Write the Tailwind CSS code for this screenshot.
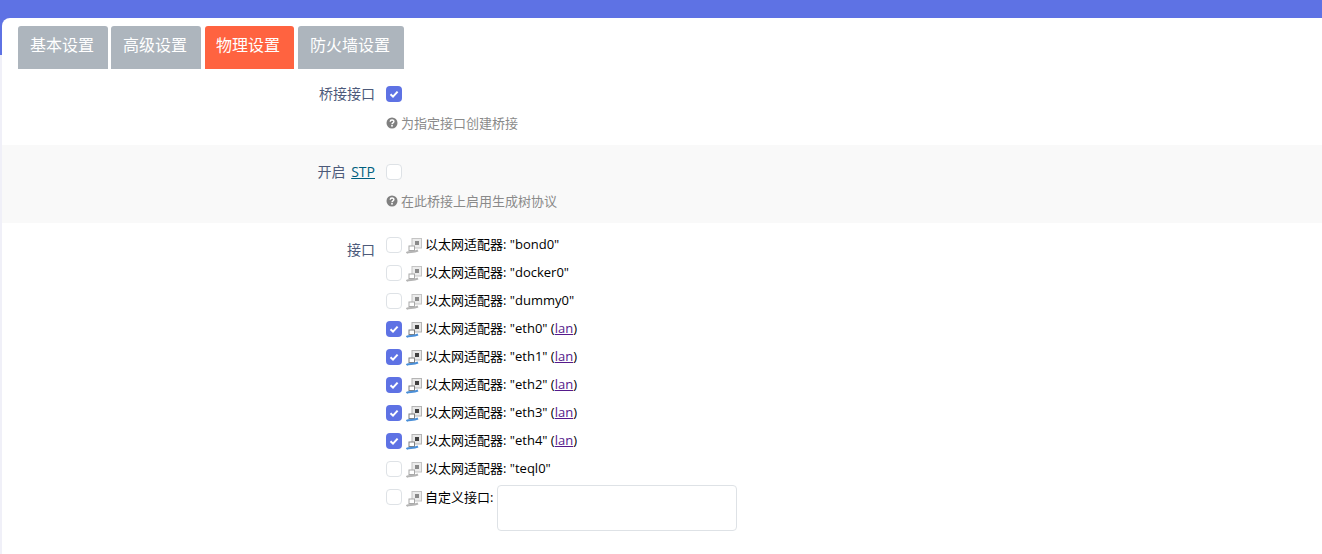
<!DOCTYPE html>
<html lang="en">
  <head>
    <meta charset="UTF-8" />
    <title>物理设置</title>
    <script src="https://cdn.jsdelivr.net/npm/@tailwindcss/browser@4"></script>
  </head>
  <body class="bg-[#f0f0f8] h-[554px] overflow-hidden font-['Open_Sans','Noto_Sans_CJK_SC',sans-serif]">
    <div class="h-[55px] bg-[#5e72e4]"></div>

    <main class="-mt-[37px] ml-[2px] h-[536px] bg-white rounded-tl-[8px] overflow-hidden">
      <!-- tabs -->
      <nav class="flex h-[51px] pt-2 pl-4 text-[16px] text-white">
        <a class="w-[90px] h-[43px] leading-[38px] pl-3 bg-[#adb5bd] rounded-t-[3px]">基本设置</a>
        <a class="w-[90px] h-[43px] ml-[3px] leading-[38px] pl-3 bg-[#adb5bd] rounded-t-[3px]">高级设置</a>
        <a class="w-[89px] h-[43px] ml-[4px] leading-[38px] pl-[11px] bg-[#ff6340] rounded-t-[3px]">物理设置</a>
        <a class="w-[106px] h-[43px] ml-[4px] leading-[38px] pl-3 bg-[#adb5bd] rounded-t-[3px]">防火墙设置</a>
      </nav>

      <!-- bridge -->
      <section class="flex h-[76px] pt-[16px] text-[13px]">
        <label class="w-[373px] text-right text-[14px] leading-[18px] text-[#4d5a7a]">桥接接口</label>
        <div class="ml-[11px]">
          <span class="flex items-center justify-center mt-[1px] w-4 h-4 rounded-[4px] bg-[#5e72e4]">
            <svg viewBox="0 0 10 10" class="w-[10px] h-[10px]"><path d="M1.5 5.2 L4 7.6 L8.6 2.6" fill="none" stroke="#fff" stroke-width="2"/></svg>
          </span>
          <p class="flex items-center gap-[3px] mt-[12px] leading-[18px] text-[#8a8a8a]">
            <svg viewBox="0 0 12 12" class="w-3 h-3"><circle cx="6" cy="6" r="5.5" fill="#808080"/><path d="M4.2 4.7 C4.2 2.5 7.9 2.5 7.9 4.6 C7.9 5.9 6 5.9 6 7.2" fill="none" stroke="#fff" stroke-width="1.4"/><rect x="5.2" y="8" width="1.6" height="1.6" fill="#fff"/></svg>
            为指定接口创建桥接
          </p>
        </div>
      </section>

      <!-- stp -->
      <section class="flex h-[78px] pt-[18px] bg-[#f9f9f9] text-[13px]">
        <label class="w-[373px] text-right text-[14px] leading-[18px] text-[#4d5a7a]">开启 <a class="ml-[2px] underline text-[#005f7f]">STP</a></label>
        <div class="ml-[11px]">
          <span class="block mt-[1px] w-4 h-4 rounded-[4px] bg-white border border-[#dee2e6]"></span>
          <p class="flex items-center gap-[3px] mt-[12px] leading-[18px] text-[#8a8a8a]">
            <svg viewBox="0 0 12 12" class="w-3 h-3"><circle cx="6" cy="6" r="5.5" fill="#808080"/><path d="M4.2 4.7 C4.2 2.5 7.9 2.5 7.9 4.6 C7.9 5.9 6 5.9 6 7.2" fill="none" stroke="#fff" stroke-width="1.4"/><rect x="5.2" y="8" width="1.6" height="1.6" fill="#fff"/></svg>
            在此桥接上启用生成树协议
          </p>
        </div>
      </section>

      <!-- interfaces -->
      <section class="flex pt-[8px] text-[13px]">
        <label class="w-[373px] pt-[10px] text-right text-[14px] leading-[18px] text-[#4d5a7a]">接口</label>
        <ul class="ml-[11px] text-black">
          <li class="flex items-center h-[28px]">
            <span class="w-4 h-4 rounded-[4px] bg-white border border-[#dee2e6]"></span>
            <svg viewBox="0 0 16 16" class="w-4 h-4 ml-[4px] mt-[2px]"><rect x="6" y="0.5" width="9.5" height="9.5" fill="#ececec" stroke="#c4c4c4"/><rect x="9" y="3" width="4" height="4" fill="#8a8a8a"/><rect x="3" y="8" width="5.5" height="4.5" fill="#fff" stroke="#a8a8a8"/><path d="M0.5 15 C3 13 7 15 12 12.5" fill="none" stroke="#b4b4b4" stroke-width="2"/></svg>
            <span class="ml-[3px]">以太网适配器: "bond0"</span>
          </li>
          <li class="flex items-center h-[28px]">
            <span class="w-4 h-4 rounded-[4px] bg-white border border-[#dee2e6]"></span>
            <svg viewBox="0 0 16 16" class="w-4 h-4 ml-[4px] mt-[2px]"><rect x="6" y="0.5" width="9.5" height="9.5" fill="#ececec" stroke="#c4c4c4"/><rect x="9" y="3" width="4" height="4" fill="#8a8a8a"/><rect x="3" y="8" width="5.5" height="4.5" fill="#fff" stroke="#a8a8a8"/><path d="M0.5 15 C3 13 7 15 12 12.5" fill="none" stroke="#b4b4b4" stroke-width="2"/></svg>
            <span class="ml-[3px]">以太网适配器: "docker0"</span>
          </li>
          <li class="flex items-center h-[28px]">
            <span class="w-4 h-4 rounded-[4px] bg-white border border-[#dee2e6]"></span>
            <svg viewBox="0 0 16 16" class="w-4 h-4 ml-[4px] mt-[2px]"><rect x="6" y="0.5" width="9.5" height="9.5" fill="#ececec" stroke="#c4c4c4"/><rect x="9" y="3" width="4" height="4" fill="#8a8a8a"/><rect x="3" y="8" width="5.5" height="4.5" fill="#fff" stroke="#a8a8a8"/><path d="M0.5 15 C3 13 7 15 12 12.5" fill="none" stroke="#b4b4b4" stroke-width="2"/></svg>
            <span class="ml-[3px]">以太网适配器: "dummy0"</span>
          </li>
          <li class="flex items-center h-[28px]">
            <span class="flex items-center justify-center w-4 h-4 rounded-[4px] bg-[#5e72e4]"><svg viewBox="0 0 10 10" class="w-[10px] h-[10px]"><path d="M1.5 5.2 L4 7.6 L8.6 2.6" fill="none" stroke="#fff" stroke-width="2"/></svg></span>
            <svg viewBox="0 0 16 16" class="w-4 h-4 ml-[4px] mt-[2px]"><rect x="6" y="0.5" width="9.5" height="9.5" fill="#e8e8e8" stroke="#b4b4b4"/><rect x="9" y="3" width="4" height="4" fill="#404040"/><rect x="3" y="8" width="5.5" height="4.5" fill="#fff" stroke="#808080"/><path d="M0.5 15 C3 13 7 15 12 12.5" fill="none" stroke="#4a8fd8" stroke-width="2"/></svg>
            <span class="ml-[3px]">以太网适配器: "eth0" (<a class="underline text-[#551a8b]">lan</a>)</span>
          </li>
          <li class="flex items-center h-[28px]">
            <span class="flex items-center justify-center w-4 h-4 rounded-[4px] bg-[#5e72e4]"><svg viewBox="0 0 10 10" class="w-[10px] h-[10px]"><path d="M1.5 5.2 L4 7.6 L8.6 2.6" fill="none" stroke="#fff" stroke-width="2"/></svg></span>
            <svg viewBox="0 0 16 16" class="w-4 h-4 ml-[4px] mt-[2px]"><rect x="6" y="0.5" width="9.5" height="9.5" fill="#e8e8e8" stroke="#b4b4b4"/><rect x="9" y="3" width="4" height="4" fill="#404040"/><rect x="3" y="8" width="5.5" height="4.5" fill="#fff" stroke="#808080"/><path d="M0.5 15 C3 13 7 15 12 12.5" fill="none" stroke="#4a8fd8" stroke-width="2"/></svg>
            <span class="ml-[3px]">以太网适配器: "eth1" (<a class="underline text-[#551a8b]">lan</a>)</span>
          </li>
          <li class="flex items-center h-[28px]">
            <span class="flex items-center justify-center w-4 h-4 rounded-[4px] bg-[#5e72e4]"><svg viewBox="0 0 10 10" class="w-[10px] h-[10px]"><path d="M1.5 5.2 L4 7.6 L8.6 2.6" fill="none" stroke="#fff" stroke-width="2"/></svg></span>
            <svg viewBox="0 0 16 16" class="w-4 h-4 ml-[4px] mt-[2px]"><rect x="6" y="0.5" width="9.5" height="9.5" fill="#e8e8e8" stroke="#b4b4b4"/><rect x="9" y="3" width="4" height="4" fill="#404040"/><rect x="3" y="8" width="5.5" height="4.5" fill="#fff" stroke="#808080"/><path d="M0.5 15 C3 13 7 15 12 12.5" fill="none" stroke="#4a8fd8" stroke-width="2"/></svg>
            <span class="ml-[3px]">以太网适配器: "eth2" (<a class="underline text-[#551a8b]">lan</a>)</span>
          </li>
          <li class="flex items-center h-[28px]">
            <span class="flex items-center justify-center w-4 h-4 rounded-[4px] bg-[#5e72e4]"><svg viewBox="0 0 10 10" class="w-[10px] h-[10px]"><path d="M1.5 5.2 L4 7.6 L8.6 2.6" fill="none" stroke="#fff" stroke-width="2"/></svg></span>
            <svg viewBox="0 0 16 16" class="w-4 h-4 ml-[4px] mt-[2px]"><rect x="6" y="0.5" width="9.5" height="9.5" fill="#e8e8e8" stroke="#b4b4b4"/><rect x="9" y="3" width="4" height="4" fill="#404040"/><rect x="3" y="8" width="5.5" height="4.5" fill="#fff" stroke="#808080"/><path d="M0.5 15 C3 13 7 15 12 12.5" fill="none" stroke="#4a8fd8" stroke-width="2"/></svg>
            <span class="ml-[3px]">以太网适配器: "eth3" (<a class="underline text-[#551a8b]">lan</a>)</span>
          </li>
          <li class="flex items-center h-[28px]">
            <span class="flex items-center justify-center w-4 h-4 rounded-[4px] bg-[#5e72e4]"><svg viewBox="0 0 10 10" class="w-[10px] h-[10px]"><path d="M1.5 5.2 L4 7.6 L8.6 2.6" fill="none" stroke="#fff" stroke-width="2"/></svg></span>
            <svg viewBox="0 0 16 16" class="w-4 h-4 ml-[4px] mt-[2px]"><rect x="6" y="0.5" width="9.5" height="9.5" fill="#e8e8e8" stroke="#b4b4b4"/><rect x="9" y="3" width="4" height="4" fill="#404040"/><rect x="3" y="8" width="5.5" height="4.5" fill="#fff" stroke="#808080"/><path d="M0.5 15 C3 13 7 15 12 12.5" fill="none" stroke="#4a8fd8" stroke-width="2"/></svg>
            <span class="ml-[3px]">以太网适配器: "eth4" (<a class="underline text-[#551a8b]">lan</a>)</span>
          </li>
          <li class="flex items-center h-[28px]">
            <span class="w-4 h-4 rounded-[4px] bg-white border border-[#dee2e6]"></span>
            <svg viewBox="0 0 16 16" class="w-4 h-4 ml-[4px] mt-[2px]"><rect x="6" y="0.5" width="9.5" height="9.5" fill="#ececec" stroke="#c4c4c4"/><rect x="9" y="3" width="4" height="4" fill="#8a8a8a"/><rect x="3" y="8" width="5.5" height="4.5" fill="#fff" stroke="#a8a8a8"/><path d="M0.5 15 C3 13 7 15 12 12.5" fill="none" stroke="#b4b4b4" stroke-width="2"/></svg>
            <span class="ml-[3px]">以太网适配器: "teql0"</span>
          </li>
          <li class="flex items-start pt-[2px]">
            <span class="mt-[4px] w-4 h-4 rounded-[4px] bg-white border border-[#dee2e6]"></span>
            <svg viewBox="0 0 16 16" class="mt-[6px] w-4 h-4 ml-[4px]"><rect x="6" y="0.5" width="9.5" height="9.5" fill="#ececec" stroke="#c4c4c4"/><rect x="9" y="3" width="4" height="4" fill="#8a8a8a"/><rect x="3" y="8" width="5.5" height="4.5" fill="#fff" stroke="#a8a8a8"/><path d="M0.5 15 C3 13 7 15 12 12.5" fill="none" stroke="#b4b4b4" stroke-width="2"/></svg>
            <span class="ml-[3px] mt-[3px] leading-[18px]">自定义接口:</span>
            <input class="ml-[4px] w-[240px] h-[46px] rounded-[4px] bg-white border border-[#dee2e6]" />
          </li>
        </ul>
      </section>
    </main>
  </body>
</html>
